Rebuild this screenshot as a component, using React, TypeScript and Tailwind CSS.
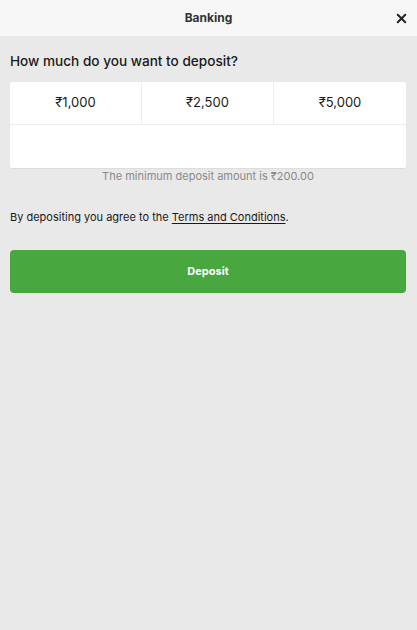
import { X } from 'lucide-react';

const amounts = ['₹1,000', '₹2,500', '₹5,000'];

export default function App() {
  return (
    <div className="min-h-[630px] bg-[#e9e9e9] font-['Inter',sans-serif] text-[#1a1a1a]">
      <header className="relative flex h-[36px] items-center justify-center bg-[#f7f7f7]">
        <h1 className="text-[12px] font-bold text-[#333]">Banking</h1>
        <button className="absolute right-[8px] top-[11px] text-[#222]">
          <X className="h-[15px] w-[15px]" strokeWidth={3.2} />
        </button>
      </header>

      <main className="pl-[10px] pr-[11px]">
        <h2 className="pt-[15px] pb-[11px] text-[13.6px] font-medium leading-[20px]">
          How much do you want to deposit?
        </h2>

        <div className="rounded-[2px] bg-white shadow-[0_1px_1px_rgba(0,0,0,0.06)]">
          <div className="grid h-[43px] grid-cols-3 border-b border-[#eeeeee]">
            {amounts.map((a, i) => (
              <button
                key={a}
                className={`flex items-center justify-center text-[13px] ${i < 2 ? 'border-r border-[#eeeeee]' : ''}`}
              >
                {a}
              </button>
            ))}
          </div>
          <div className="h-[43px]" />
        </div>

        <p className="mt-[1px] text-center text-[11px] leading-[14px] text-[#8a8a8a]">
          The minimum deposit amount is ₹200.00
        </p>

        <p className="mt-[27px] text-[11px] leading-[14px] text-[#1a1a1a]">
          By depositing you agree to the{' '}
          <a className="underline underline-offset-2" href="#">Terms and Conditions</a>.
        </p>

        <button className="mt-[26px] flex h-[43px] w-full items-center justify-center rounded-[4px] bg-[#48a73f] text-[11px] font-bold text-white">
          Deposit
        </button>
      </main>
    </div>
  );
}
